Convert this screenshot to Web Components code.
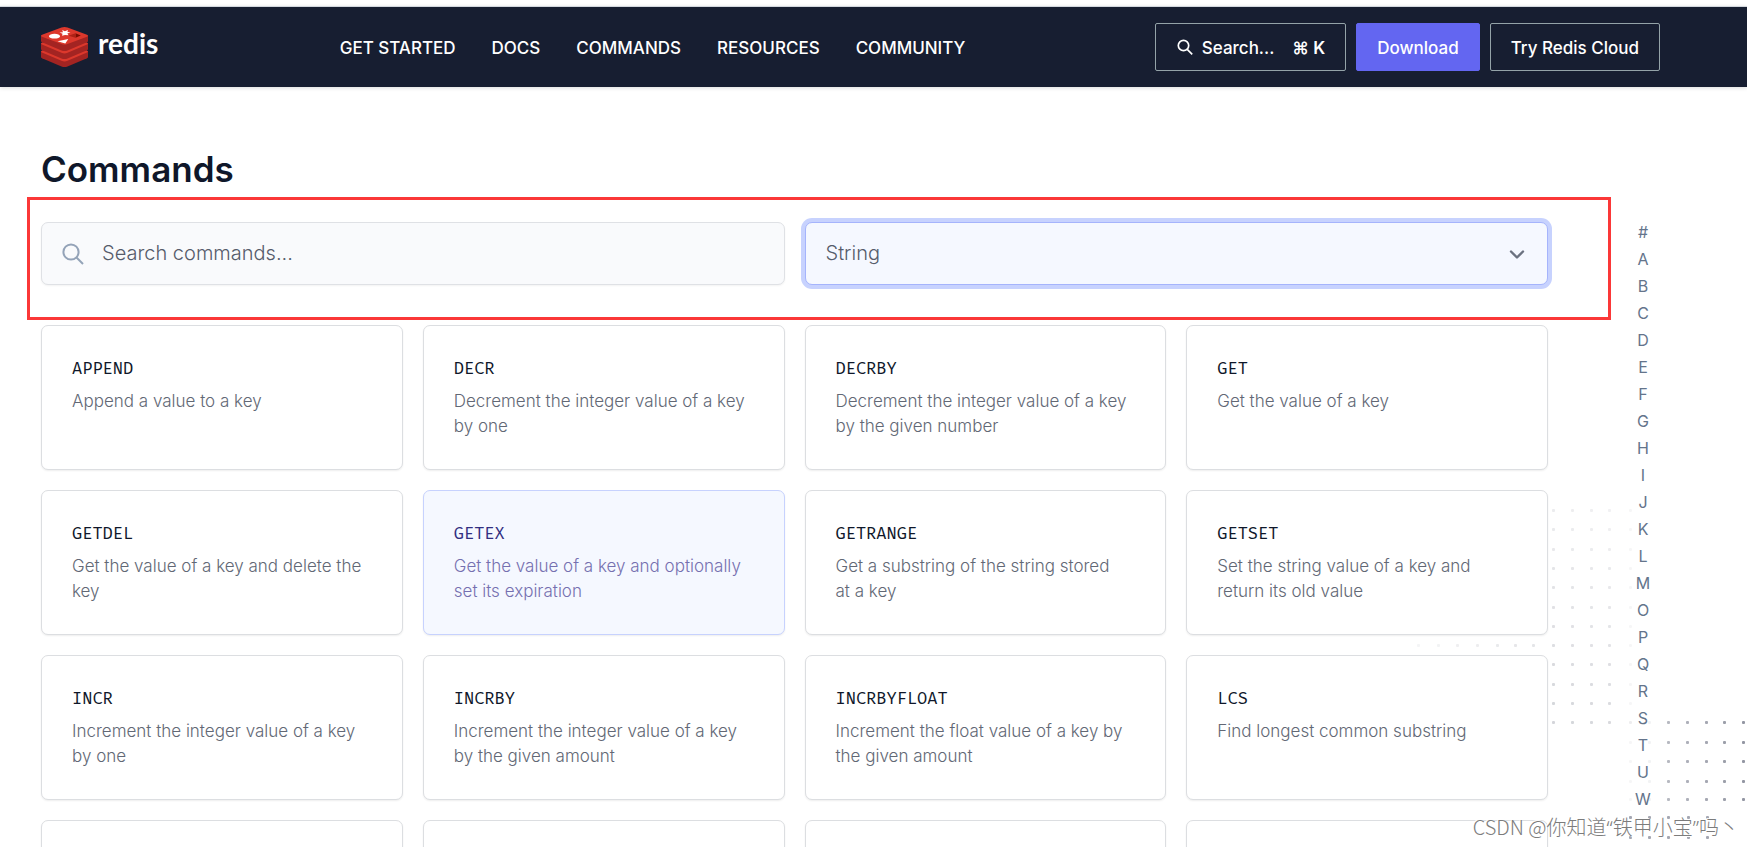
<!DOCTYPE html>
<html lang="en">
<head>
<meta charset="utf-8">
<meta name="viewport" content="width=device-width, initial-scale=1">
<title>Commands | Redis</title>
<style>
  html, body { margin: 0; height: 100%; }
  body { background: #fff; color: #0f172a; font-family: Inter, "Liberation Sans", "Noto Sans CJK SC", sans-serif; overflow: hidden; }
</style>
</head>
<body>
<redis-page></redis-page>

<script>
class BaseElement extends HTMLElement {
  connectedCallback() {
    if (this.shadowRoot) return;
    this.attachShadow({ mode: 'open' }).innerHTML = this.render();
  }
}

class RedisLogo extends BaseElement {
  render() {
    return `
      <style>
        :host { display: block; }
        a { display: flex; align-items: center; gap: 10px; color: #fff; text-decoration: none; font: 700 28px/36px Lato, sans-serif; }
        svg { display: block; }
        span { padding-bottom: 8px; }
      </style>
      <a href="#home">
        <svg width="47" height="40" viewBox="0 0 47 40" aria-hidden="true">
          <g>
            <path fill="#a32422" d="M0 24.500V30q0 .7 1 1.200l19.500 8.300q3 1 6 0L46 31.200q1-.5 1-1.200v-5.500z"/>
            <path fill="#dc382c" d="M0 24.500q0 .6 1 1l19.500 8.300q3 1.200 6 0L46 25.500q1-.4 1-1-.1-.7-1-1L26.500 15q-3-1-6 0L1 23.500q-1 .4-1 1z"/>
            <path fill="#a32422" d="M0 16.500V22q0 .7 1 1.200l19.500 8.300q3 1 6 0L46 23.200q1-.5 1-1.200v-5.500z"/>
            <path fill="#dc382c" d="M0 16.500q0 .6 1 1l19.500 8.300q3 1.200 6 0L46 17.500q1-.4 1-1-.1-.7-1-1L26.500 7q-3-1-6 0L1 15.500q-1 .4-1 1z"/>
            <path fill="#a32422" d="M0 8.700V14q0 .7 1 1.200l19.500 8.300q3 1 6 0L46 15.200q1-.5 1-1.200V8.700z"/>
            <path fill="#dc382c" d="M0 8.700q0 .6 1 1L20.500 17q3 1.200 6 0L46 9.700q1-.4 1-1-.1-.7-1-1L26.500.5q-3-1-6 0L1 7.700q-1 .4-1 1z"/>
          </g>
          <ellipse cx="13.500" cy="9.200" rx="5.500" ry="2.400" fill="#fff"/>
          <path fill="#fff" d="M16.500 14.200 27.300 12l-3 4.500zM24 7.900l-3 .9.500-2L18.500 5.500l3.500-.2L21.200 3l2.700 1.300L27 2.900l-.6 1.900 3.100 1-3.100.5 1.100 2z"/>
          <path fill="#7a0c00" d="m34.500 6.300 5.300 2.200-5.300 2.300z"/>
          <path fill="#ad2115" d="M34.500 6.300v4.500l-7-2.100z"/>
        </svg>
        <span>redis</span>
      </a>`;
  }
}

class NavLink extends BaseElement {
  render() {
    return `
      <style>
        :host { display: block; }
        a { color: #fff; text-decoration: none; font-size: 17px; line-height: 24px; font-weight: 500; white-space: nowrap; }
      </style>
      <a href="#"><slot></slot></a>`;
  }
}

class HeaderButton extends BaseElement {
  render() {
    return `
      <style>
        :host { display: block; }
        button { display: flex; align-items: center; box-sizing: border-box; height: 48px; padding: 2px 20px 0; border: 1px solid #94a3a8; border-radius: 2px; background: transparent; color: #fff; font: inherit; font-size: 17px; font-weight: 500; white-space: nowrap; }
        :host([primary]) button { background: #6366f1; border-color: #6366f1; }
      </style>
      <button type="button"><slot></slot></button>`;
  }
}

class SiteHeader extends BaseElement {
  render() {
    return `
      <style>
        :host { display: block; margin-top: 6px; border-top: 1px solid #d3d8de; background: #171e31; box-shadow: 0 1px 4px rgba(0,0,0,.14); }
        .bar { display: flex; align-items: center; justify-content: space-between; min-height: 80px; padding: 0 87px 0 41px; }
        nav { display: flex; gap: 36px; padding: 2px 8px 0 0; }
        .actions { display: flex; gap: 10px; }
        .find { display: flex; align-items: center; gap: 8px; }
        b { margin-left: 10px; font-weight: 600; }
      </style>
      <header class="bar">
        <redis-logo></redis-logo>
        <nav aria-label="Main">
          <nav-link>GET STARTED</nav-link>
          <nav-link>DOCS</nav-link>
          <nav-link>COMMANDS</nav-link>
          <nav-link>RESOURCES</nav-link>
          <nav-link>COMMUNITY</nav-link>
        </nav>
        <div class="actions">
          <header-button>
            <span class="find">
              <svg width="18" height="18" viewBox="0 0 18 18" fill="none" stroke="#fff" stroke-width="1.700" aria-hidden="true"><circle cx="7.500" cy="6.500" r="5.200"/><path d="m11.200 10.300 5 5"/></svg>
              Search... <b>⌘ K</b>
            </span>
          </header-button>
          <header-button primary>Download</header-button>
          <header-button>Try Redis Cloud</header-button>
        </div>
      </header>`;
  }
}

class CommandFilters extends BaseElement {
  render() {
    return `
      <style>
        :host { display: grid; grid-template-columns: 1fr 1fr; gap: 20px; position: relative; }
        .field { display: grid; align-items: center; }
        .field > * { grid-area: 1 / 1; }
        input, select { box-sizing: border-box; width: 100%; height: 63px; margin: 0; border: 1px solid #dfe1e5; border-radius: 7px; outline: none; appearance: none; font: inherit; font-size: 20px; font-weight: 300; color: #565c6b; box-shadow: 0 1px 2px rgba(0,0,0,.05); }
        input { padding: 0 20px 2px 60px; background: #f9fafc; }
        input::placeholder { color: #565c6b; opacity: 1; }
        select { padding: 0 60px 2px 20px; background: #f5f8ff; border-color: #a5b4fc; box-shadow: 0 0 0 4px #c7d2fe; }
        svg { z-index: 1; pointer-events: none; }
        .glass { margin-left: 21px; }
        .chevron { justify-self: end; margin-right: 20px; }
        .marker { position: absolute; inset: -25px -63px -35px -14px; border: 3px solid #fb3838; pointer-events: none; }
      </style>
      <div class="field">
        <input type="search" aria-label="Search commands" placeholder="Search commands...">
        <svg class="glass" width="22" height="22" viewBox="0 0 22 22" fill="none" stroke="#94a3b8" stroke-width="2" aria-hidden="true"><circle cx="9" cy="9" r="7.600"/><path d="m14.500 14.500 6.500 6.500"/></svg>
      </div>
      <div class="field">
        <select aria-label="Filter by group"><option>String</option></select>
        <svg class="chevron" width="22" height="22" viewBox="0 0 22 22" fill="none" stroke="#6b7280" stroke-width="2.400" stroke-linecap="round" stroke-linejoin="round" aria-hidden="true"><path d="m5 8.500 6 6 6-6"/></svg>
      </div>
      <div class="marker"></div>`;
  }
}

class CommandCard extends BaseElement {
  render() {
    return `
      <style>
        :host { display: block; }
        a { display: block; box-sizing: border-box; height: 100%; min-height: 145px; padding: 31px 38px 24px 30px; border: 1px solid #dcdee1; border-radius: 7px; background: #fff; color: #626875; text-decoration: none; box-shadow: 0 1px 2px rgba(0,0,0,.07); }
        h2 { margin: 0 0 8px; color: #0f172a; font: 400 17px/24px "Fira Mono", "DejaVu Sans Mono", monospace; }
        p { margin: 0; font-size: 17px; line-height: 25px; font-weight: 300; }
        :host([active]) a { background: #f5f8ff; border-color: #c7d2fe; color: #7570b0; }
        :host([active]) h2 { color: #312e81; }
      </style>
      <a href="#"><h2><slot name="name"></slot></h2><p><slot></slot></p></a>`;
  }
}

class AlphabetIndex extends BaseElement {
  render() {
    const items = [...'#ABCDEFGHIJKLMOPQRSTUW'].map(c => `<a href="#">${c}</a>`).join('');
    return `
      <style>
        :host { display: block; width: 34px; }
        nav { display: flex; flex-direction: column; align-items: center; }
        a { color: #64748b; text-decoration: none; font-size: 16px; line-height: 27px; font-weight: 400; }
      </style>
      <nav aria-label="Alphabetical index">${items}</nav>`;
  }
}

class DotPattern extends BaseElement {
  render() {
    const dot = (x, y, o) => `<rect x="${x - 1}" y="${y - 1}" width="3" height="3" rx="1" fill-opacity="${o}"/>`;
    let dots = '';
    const leftX = [141, 160, 179, 197];
    for (let r = 0; r < 12; r++) {
      const y = Math.round(3 + r * 19.300);
      leftX.forEach((x, i) => { dots += dot(x, y, (.11 + r * .012 - i * .01).toFixed(2)); });
      dots += dot(218, y, .05);
    }
    [6, 26, 45, 65, 85, 103, 121].forEach((x, i) => { dots += dot(x, 138, (.06 + i * .015).toFixed(2)); });
    [215, 235, 254, 274, 292].forEach(y => {
      dots += dot(218, y, .05) + dot(237, y, .07);
      [256, 275, 294, 312, 331].forEach((x, i) => { dots += dot(x, y, .4 + i * .05); });
    });
    [310, 330].forEach(y => [218, 237, 256, 276, 295].forEach(x => { dots += dot(x, y, .5); }));
    return `
      <style>
        :host { display: block; position: absolute; right: 0; bottom: 0; z-index: -1; }
        svg { display: block; }
      </style>
      <svg width="335" height="340" viewBox="0 0 335 340" fill="#4b5065" aria-hidden="true">${dots}</svg>`;
  }
}

class WaterMark extends BaseElement {
  render() {
    return `
      <style>
        :host { display: block; position: absolute; right: 8px; bottom: 4px; z-index: 2; color: #7c7c7c; font: 300 20px/30px "Noto Sans CJK SC", sans-serif; white-space: nowrap; text-shadow: -1px -1px 0 rgba(255,255,255,.9), 1px 1px 0 #fff; }
        ::slotted(span) { font-family: "Noto Sans", sans-serif; }
      </style>
      <slot></slot>`;
  }
}

class RedisPage extends BaseElement {
  render() {
    const commands = [
      ['APPEND', 'Append a value to a key'],
      ['DECR', 'Decrement the integer value of a key by one'],
      ['DECRBY', 'Decrement the integer value of a key by the given number'],
      ['GET', 'Get the value of a key'],
      ['GETDEL', 'Get the value of a key and delete the key'],
      ['GETEX', 'Get the value of a key and optionally set its expiration', true],
      ['GETRANGE', 'Get a substring of the string stored at a key'],
      ['GETSET', 'Set the string value of a key and return its old value'],
      ['INCR', 'Increment the integer value of a key by one'],
      ['INCRBY', 'Increment the integer value of a key by the given amount'],
      ['INCRBYFLOAT', 'Increment the float value of a key by the given amount'],
      ['LCS', 'Find longest common substring'],
      ['', ''], ['', ''], ['', ''], ['', '']
    ];
    const cards = commands.map(([n, d, on]) => `<command-card${on ? ' active' : ''}><span slot="name">${n}</span>${d}</command-card>`).join('');
    return `
      <style>
        :host { display: flow-root; position: relative; z-index: 0; height: 100vh; overflow: hidden; }
        main { padding: 60px 87px 0 41px; }
        h1 { margin: 0; font-size: 35px; line-height: 44px; font-weight: 600; }
        .columns { display: flex; gap: 78px; align-items: flex-start; margin-top: 31px; }
        .content { flex: 1; min-width: 0; }
        .grid { display: grid; grid-template-columns: repeat(4, 1fr); gap: 20px; margin-top: 40px; }
        alphabet-index { margin-top: -3px; }
      </style>
      <site-header></site-header>
      <main>
        <h1>Commands</h1>
        <div class="columns">
          <div class="content">
            <command-filters></command-filters>
            <div class="grid">${cards}</div>
          </div>
          <alphabet-index></alphabet-index>
        </div>
      </main>
      <dot-pattern></dot-pattern>
      <water-mark>CSDN @你知道<span>“</span>铁甲小宝<span>”</span>吗丶</water-mark>`;
  }
}

customElements.define('redis-logo', RedisLogo);
customElements.define('nav-link', NavLink);
customElements.define('header-button', HeaderButton);
customElements.define('site-header', SiteHeader);
customElements.define('command-filters', CommandFilters);
customElements.define('command-card', CommandCard);
customElements.define('alphabet-index', AlphabetIndex);
customElements.define('dot-pattern', DotPattern);
customElements.define('water-mark', WaterMark);
customElements.define('redis-page', RedisPage);
</script>
</body>
</html>
